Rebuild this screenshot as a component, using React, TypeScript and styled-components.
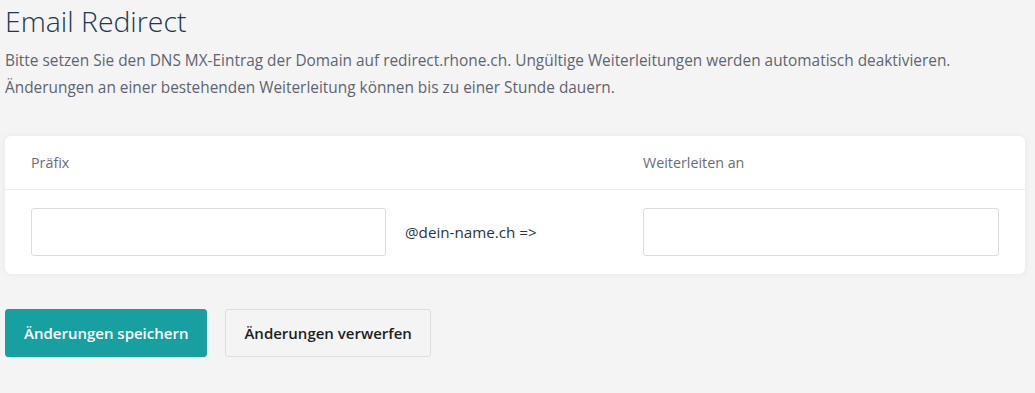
import React from "react";
import styled, { createGlobalStyle } from "styled-components";

const Global = createGlobalStyle`
  html, body { margin: 0; padding: 0; background: #f4f4f4; }
  body { font-family: "Open Sans", "Noto Sans", sans-serif; }
  * { box-sizing: border-box; }
`;

const Page = styled.div`
  padding: 0 10px 0 5px;
  width: 1035px;
`;

const Title = styled.h1`
  margin: 0;
  padding-top: 2px;
  font-weight: 300;
  font-size: 28.4px;
  line-height: 38px;
  color: #1b3a4f;
`;

const Intro = styled.p`
  margin: 7px 0 0;
  font-size: 15.4px;
  line-height: 27px;
  color: #5e6471;
`;

const Card = styled.section`
  margin-top: 35px;
  background: #fff;
  border-radius: 6px;
  box-shadow: 0 0 6px rgba(0, 0, 0, 0.06);
`;

const Row = styled.div<{ $header?: boolean }>`
  display: grid;
  grid-template-columns: 355px 219px 356px;
  column-gap: 19px;
  align-items: center;
  padding: ${(p) => (p.$header ? "0 26px" : "18px 26px")};
  height: ${(p) => (p.$header ? "54px" : "auto")};
  border-bottom: ${(p) => (p.$header ? "1px solid #ececec" : "none")};
`;

const Label = styled.span`
  font-size: 14.3px;
  color: #6b6d73;
`;

const Input = styled.input`
  height: 48px;
  width: 100%;
  border: 1px solid #dcdcdc;
  border-radius: 3px;
  background: #fff;
  font-family: inherit;
  font-size: 15px;
  padding: 0 12px;
  outline: none;
`;

const Suffix = styled.span`
  font-size: 15.2px;
  color: #263545;
`;

const Actions = styled.div`
  display: flex;
  gap: 18px;
  margin-top: 35px;
`;

const Button = styled.button<{ $primary?: boolean }>`
  height: 48px;
  padding: 0 18px;
  border-radius: 3px;
  font-family: inherit;
  font-size: 15px;
  font-weight: 550;
  cursor: pointer;
  background: ${(p) => (p.$primary ? "#17a09f" : "#f4f4f4")};
  color: ${(p) => (p.$primary ? "#fff" : "#1d1d1d")};
  border: 1px solid ${(p) => (p.$primary ? "#17a09f" : "#dedede")};
`;

export default function App() {
  return (
    <Page>
      <Global />
      <Title>Email Redirect</Title>
      <Intro>
        Bitte setzen Sie den DNS MX-Eintrag der Domain auf redirect.rhone.ch. Ungültige Weiterleitungen werden automatisch deaktivieren.
        <br />
        Änderungen an einer bestehenden Weiterleitung können bis zu einer Stunde dauern.
      </Intro>
      <Card>
        <Row $header>
          <Label>Präfix</Label>
          <span />
          <Label>Weiterleiten an</Label>
        </Row>
        <Row>
          <Input />
          <Suffix>@dein-name.ch =&gt;</Suffix>
          <Input />
        </Row>
      </Card>
      <Actions>
        <Button $primary>Änderungen speichern</Button>
        <Button>Änderungen verwerfen</Button>
      </Actions>
    </Page>
  );
}
